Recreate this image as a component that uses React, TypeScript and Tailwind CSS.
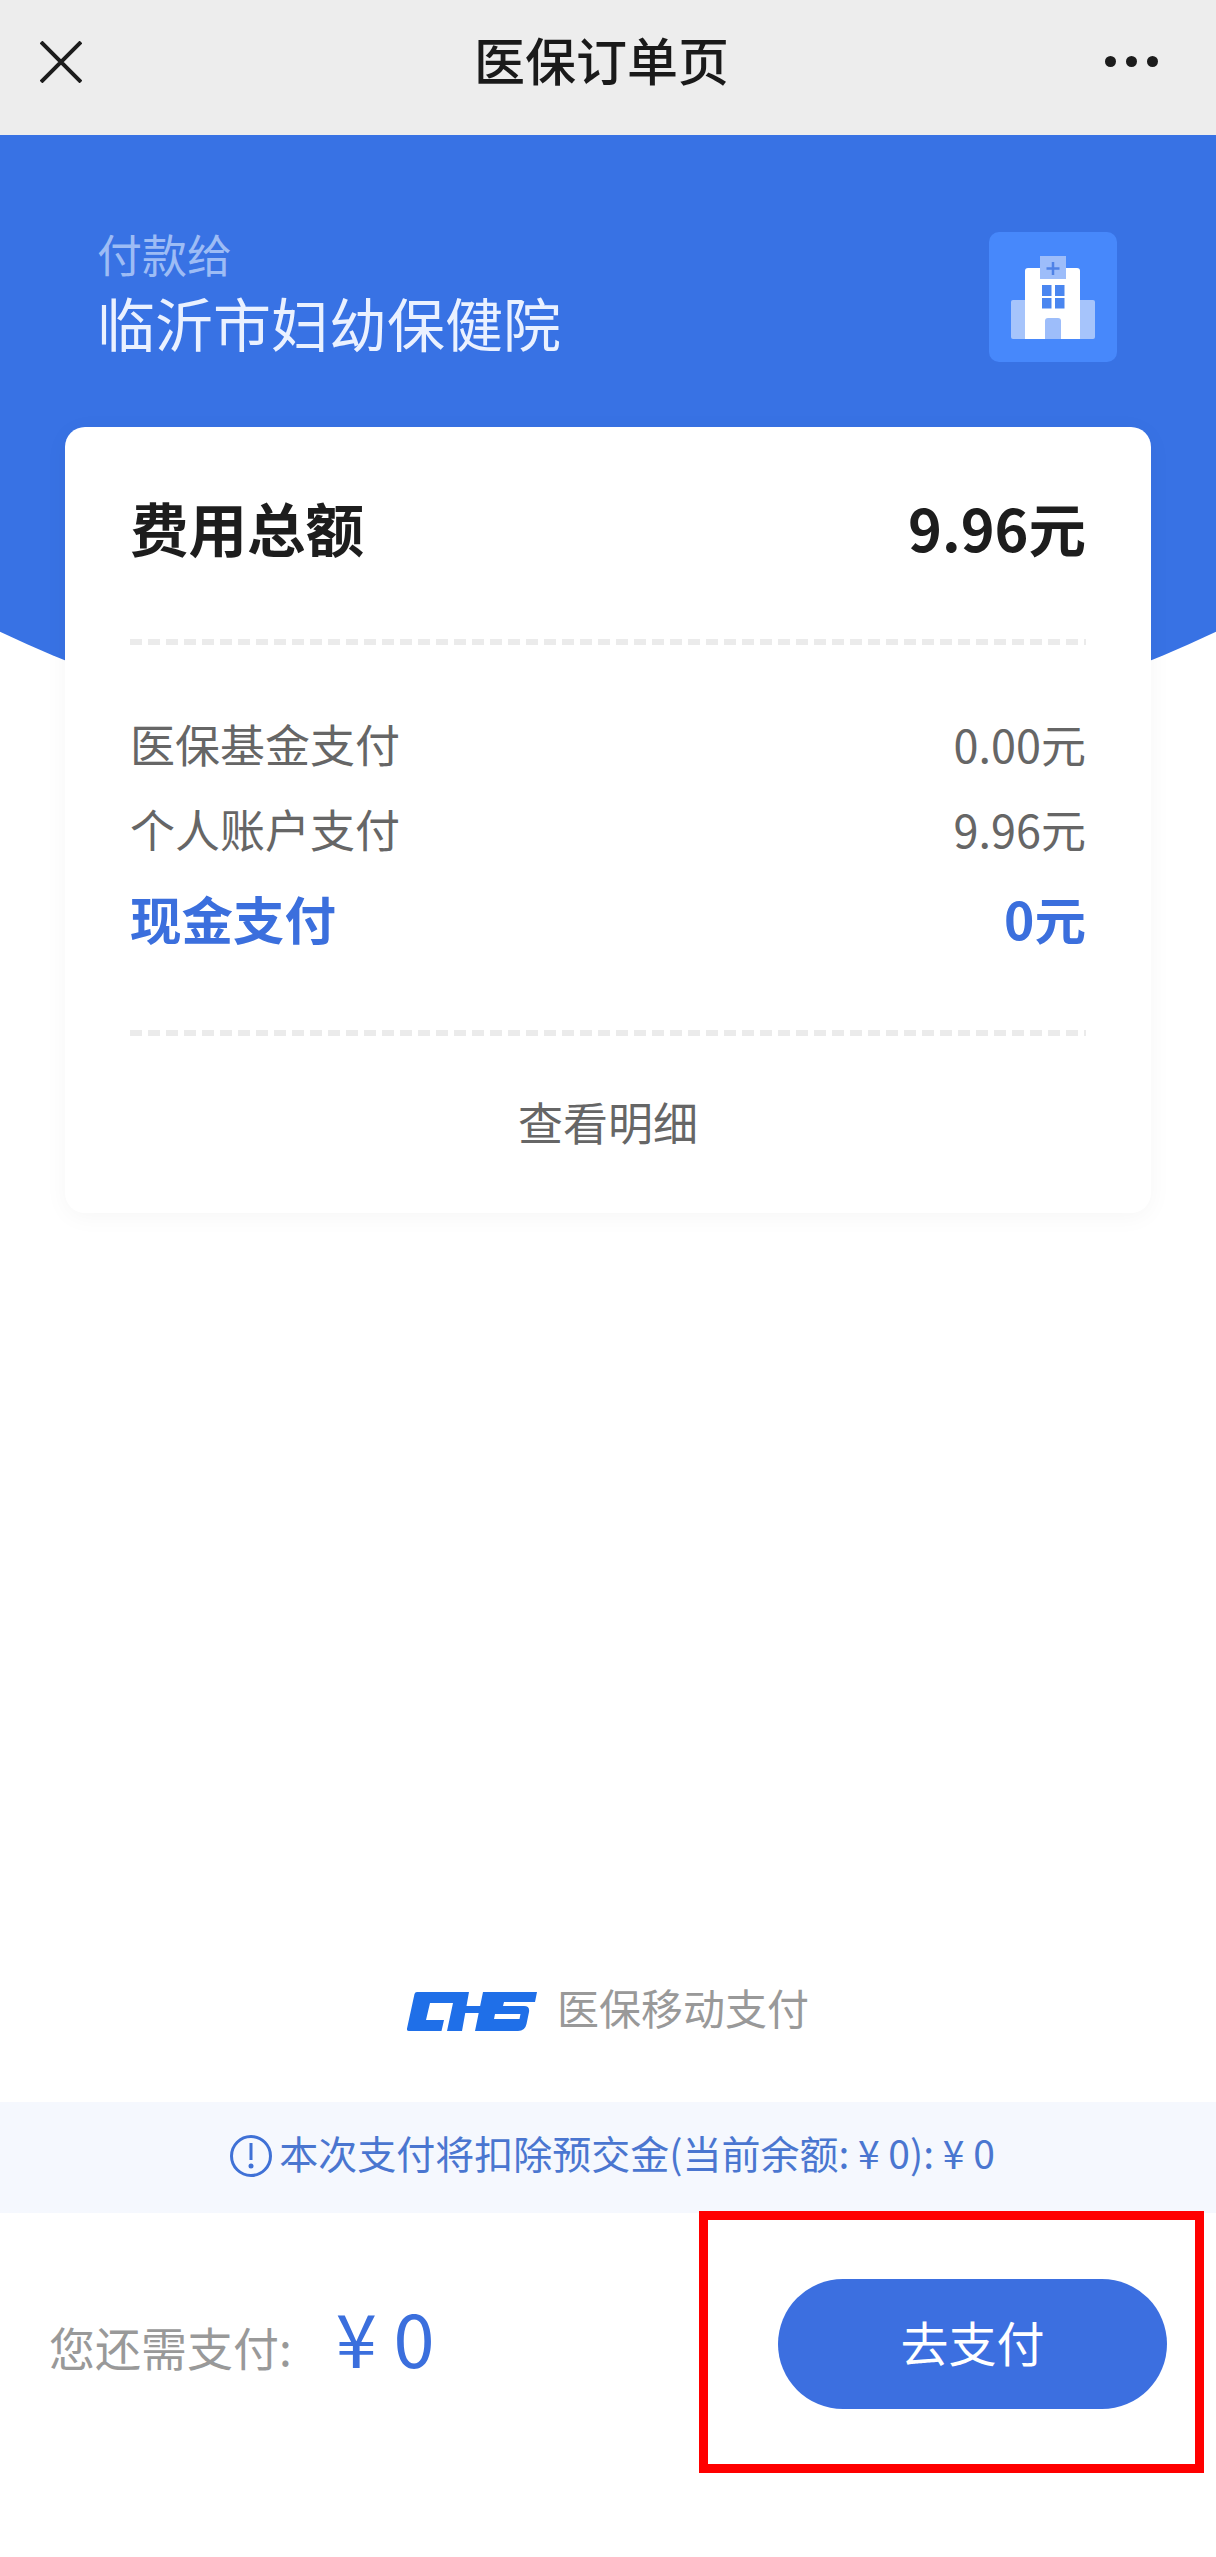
const FONT = "font-['Noto_Sans_CJK_SC','Noto_Sans',sans-serif]";

const Dashes = ({ className }: { className: string }) => (
  <div className={`h-[6px] bg-[repeating-linear-gradient(90deg,#ebebeb_0_12px,transparent_12px_18px)] ${className}`} />
);

function HospitalIcon() {
  return (
    <svg width="128" height="130" viewBox="0 0 128 130">
      <rect x="22" y="68" width="84" height="39" rx="2" fill="#a6c4fb" />
      <path d="M36 107V39a3 3 0 0 1 3-3h49a3 3 0 0 1 3 3v68z" fill="#fff" />
      <rect x="51" y="24" width="26" height="23" fill="#9dbdfa" />
      <path d="M64 30v13M57.5 36.500h13" stroke="#4f82e6" strokeWidth="2.500" />
      <rect x="53" y="53" width="9.500" height="11" fill="#4a86f0" />
      <rect x="66" y="53" width="9.500" height="11" fill="#4a86f0" />
      <rect x="53" y="66" width="9.500" height="10.500" fill="#4a86f0" />
      <rect x="66" y="66" width="9.500" height="10.500" fill="#4a86f0" />
      <path d="M56 107V89a3 3 0 0 1 3-3h10a3 3 0 0 1 3 3v18z" fill="#9dbdfa" />
    </svg>
  );
}

function ChsLogo() {
  return (
    <svg width="130" height="39" viewBox="0 0 130 39" fill="#1f6fe8" fillRule="evenodd" className="mt-[4px]">
      <path d="M10 0H62L55 39H40L46 11H23L19 28H37L34.500 39H2Q-.5 39 0 36.500L7.500 2Q8 0 10 0z" />
      <path d="M58 14H78L76.500 21H56.500z" />
      <path d="M76 0H130L128 10H97L96 14H117Q123 14 122 20L119.500 32Q118 39 111 39H68zM88 22H113.500L112.500 27H87z" />
    </svg>
  );
}

export default function App() {
  return (
    <div className={`relative flex h-[2557px] flex-col overflow-hidden bg-white ${FONT}`}>
      {/* top bar */}
      <div className="flex h-[135px] shrink-0 items-center justify-between bg-[#ededed] pr-[58px] pb-[12px] pl-[40px]">
        <svg width="42" height="42" viewBox="0 0 42 42" fill="none" stroke="#1c1c1c" strokeWidth="4">
          <path d="M1 1l40 40M41 1L1 41" />
        </svg>
        <div className="mb-[6px] ml-[16px] text-[51px] leading-[60px] font-medium text-[#1a1a1a]">医保订单页</div>
        <div className="flex gap-[10px]">
          <span className="size-[11px] rounded-full bg-[#1c1c1c]" />
          <span className="size-[11px] rounded-full bg-[#1c1c1c]" />
          <span className="size-[11px] rounded-full bg-[#1c1c1c]" />
        </div>
      </div>

      {/* blue head, the card sits over its lower part */}
      <div className="flex h-[640px] shrink-0 items-start justify-between bg-[#3872e4] pt-[97px] pr-[99px] pl-[97px] [clip-path:ellipse(1000px_622px_at_608px_3px)]">
        <div>
          <div className="text-[45px] leading-[44px] text-[#9dbcf5]">付款给</div>
          <div className="mt-[17px] text-[58px] leading-[58px] text-[#eaf1ff]">临沂市妇幼保健院</div>
        </div>
        <div className="h-[130px] w-[128px] rounded-[10px] bg-[#4788fb]">
          <HospitalIcon />
        </div>
      </div>

      {/* fee card */}
      <div className="relative mx-[65px] -mt-[348px] h-[786px] shrink-0 rounded-[20px] bg-white px-[65px] pt-[73px] shadow-[0_4px_24px_rgba(0,0,0,0.04)]">
        <div className="flex h-[60px] items-center justify-between pb-[6px] text-[58.5px] leading-[60px] font-bold text-[#1d1d1d]">
          <span>费用总额</span>
          <span className="text-[57.5px]">9.96元</span>
        </div>
        <Dashes className="mt-[79px]" />
        <div className="mt-[74px] flex h-[50px] items-center justify-between text-[45px] leading-[50px] text-[#666]">
          <span>医保基金支付</span>
          <span>0.00元</span>
        </div>
        <div className="mt-[35px] flex h-[50px] items-center justify-between text-[45px] leading-[50px] text-[#666]">
          <span>个人账户支付</span>
          <span>9.96元</span>
        </div>
        <div className="mt-[36px] flex h-[50px] items-center justify-between pt-[6px] text-[51.5px] leading-[50px] font-bold text-[#3b6fdd]">
          <span>现金支付</span>
          <span>0元</span>
        </div>
        <Dashes className="mt-[90px]" />
        <div className="mt-[58px] text-center text-[45px] leading-[56px] text-[#666]">查看明细</div>
      </div>

      {/* brand + notice + pay bar */}
      <div className="mt-auto flex h-[44px] items-start justify-center gap-[20px]">
        <ChsLogo />
        <span className="-mt-[3px] text-[42px] leading-[44px] text-[#999]">医保移动支付</span>
      </div>
      <div className="mt-[70px] flex h-[111px] shrink-0 items-center justify-center gap-[7px] bg-[#f5f8fe] pb-[4px] pl-[9px] text-[39px] text-[#4a76d0]">
        <svg width="42" height="42" viewBox="0 0 42 42" fill="none" stroke="#3f71d6" strokeWidth="3">
          <circle cx="21" cy="21" r="19.500" />
          <path d="M21 8v17" />
          <circle cx="21" cy="31" r="2.500" fill="#3f71d6" stroke="none" />
        </svg>
        <span className="mb-[6px]">本次支付将扣除预交金(当前余额: ¥ 0): ¥ 0</span>
      </div>
      <div className="flex h-[344px] shrink-0 items-start pt-[66px] pl-[49px]">
        <span className="mt-[37px] text-[46px] leading-[60px] text-[#999]">您还需支付:</span>
        <span className="mt-[17px] ml-[44px] text-[74px] leading-[80px] text-[#3b6fdd]">¥ 0</span>
        <button className="mr-[49px] ml-auto h-[130px] w-[389px] rounded-full bg-[#3c6fe0] pb-[6px] text-[48px] text-white">去支付</button>
      </div>

      {/* red annotation frame over the pay button */}
      <div className="absolute top-[2211px] left-[699px] h-[262px] w-[505px] border-[9px] border-[#f00]" />
    </div>
  );
}
